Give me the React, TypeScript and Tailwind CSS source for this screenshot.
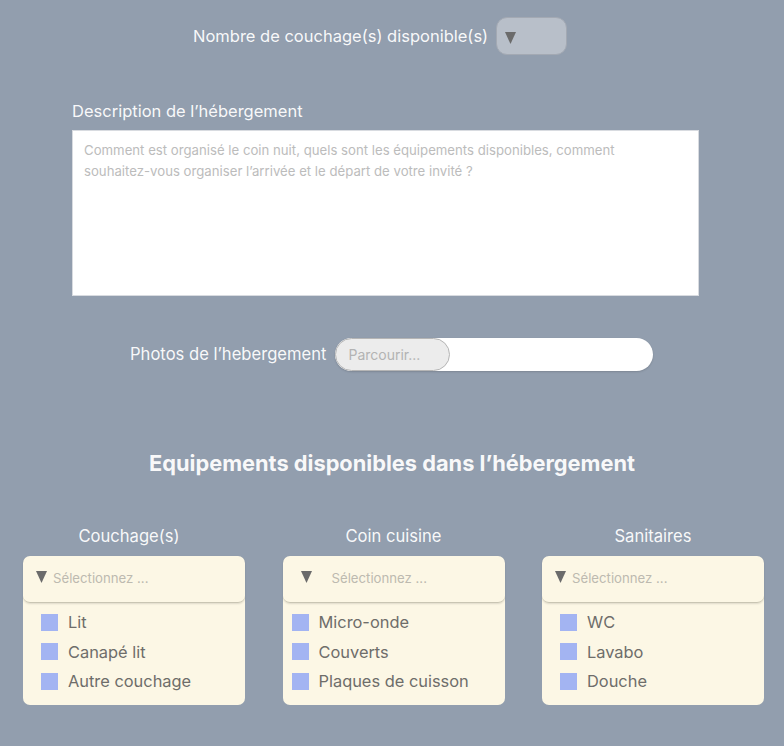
const columns = [
  {
    title: "Couchage(s)",
    items: ["Lit", "Canapé lit", "Autre couchage"],
    wide: false,
    shift: true,
  },
  {
    title: "Coin cuisine",
    items: ["Micro-onde", "Couverts", "Plaques de cuisson"],
    wide: true,
    shift: false,
  },
  {
    title: "Sanitaires",
    items: ["WC", "Lavabo", "Douche"],
    wide: false,
    shift: false,
  },
];

const Triangle = ({ className }: { className?: string }) => (
  <svg width="11" height="12" viewBox="0 0 11 12" className={className}>
    <path d="M0 0 L11 0 L5.5 12 Z" fill="#6b6b6b" />
  </svg>
);

const EquipmentCard = ({
  title,
  items,
  wide,
  shift,
}: {
  title: string;
  items: string[];
  wide: boolean;
  shift: boolean;
}) => (
  <div className="flex w-[222px] flex-col items-center">
    <p
      className={
        shift
          ? "h-[20px] -translate-x-[5px] text-[16.6px] leading-[20px] text-white/95"
          : "h-[20px] text-[16.6px] leading-[20px] text-white/95"
      }
    >
      {title}
    </p>
    <div className="mt-[10px] w-full rounded-[7px] bg-[#fcf7e5]">
      <div
        className={
          wide
            ? "flex h-[47px] items-center rounded-[7px] border-b border-[#c9c5b3] pl-[18px] shadow-[0_1px_2px_rgba(0,0,0,0.12)]"
            : "flex h-[47px] items-center rounded-[7px] border-b border-[#c9c5b3] pl-[13px] shadow-[0_1px_2px_rgba(0,0,0,0.12)]"
        }
      >
        <Triangle className="-mt-[4px]" />
        <span
          className={
            wide
              ? "ml-[20px] text-[13.2px] text-[#bdbab0]"
              : "ml-[6px] text-[13.2px] text-[#bdbab0]"
          }
        >
          Sélectionnez ...
        </span>
      </div>
      <ul
        className={
          wide
            ? "flex flex-col gap-[11.5px] pb-[15px] pl-[9px] pt-[10px]"
            : "flex flex-col gap-[11.5px] pb-[15px] pl-[18px] pt-[10px]"
        }
      >
        {items.map((item) => (
          <li key={item} className="flex h-[18px] items-center">
            <span className="h-[17px] w-[17px] bg-[#a3b4f2]" />
            <span className="ml-[10px] text-[16.4px] leading-[18px] text-[#6e6d6a]">
              {item}
            </span>
          </li>
        ))}
      </ul>
    </div>
  </div>
);

export default function App() {
  return (
    <div className="h-[746px] w-[784px] overflow-hidden bg-[#929eae] font-['Inter',sans-serif]">
      <div className="flex items-center pl-[193px] pt-[17px]">
        <span className="text-[16.5px] text-white/95">
          Nombre de couchage(s) disponible(s)
        </span>
        <div className="ml-[8px] flex h-[38px] w-[71px] items-center rounded-[11px] border border-[#a3a9b3] bg-[#b8bfc9] pl-[8px]">
          <Triangle className="mt-[4px]" />
        </div>
      </div>

      <div className="pl-[72px] pt-[46px]">
        <p className="text-[16.5px] leading-[20px] text-white/95">
          Description de l’hébergement
        </p>
        <div className="mt-[9px] h-[166px] w-[627px] border border-[#d8dbe0] bg-white px-[11px] pt-[9px] text-[13.2px] leading-[21px] text-[#bcbcbc]">
          Comment est organisé le coin nuit, quels sont les équipements disponibles, comment
          <br />
          souhaitez-vous organiser l’arrivée et le départ de votre invité ?
        </div>
      </div>

      <div className="flex items-center pl-[130px] pt-[42px]">
        <span className="text-[16.6px] text-white/95">Photos de l’hebergement</span>
        <div className="ml-[9px] flex h-[33px] w-[318px] items-stretch rounded-full bg-white shadow-[0_1px_2px_rgba(0,0,0,0.15)]">
          <div className="flex w-[115px] items-center rounded-full border border-[#b5b5b5] bg-[#ececec] pl-[12px] text-[14px] text-[#b3b3b3]">
            Parcourir...
          </div>
        </div>
      </div>

      <h2 className="pt-[78px] text-center text-[21.8px] font-bold leading-[28px] text-white/95">
        Equipements disponibles dans l’hébergement
      </h2>

      <div className="flex gap-[37.5px] pl-[23px] pt-[49px]">
        {columns.map((c) => (
          <EquipmentCard key={c.title} {...c} />
        ))}
      </div>
    </div>
  );
}
